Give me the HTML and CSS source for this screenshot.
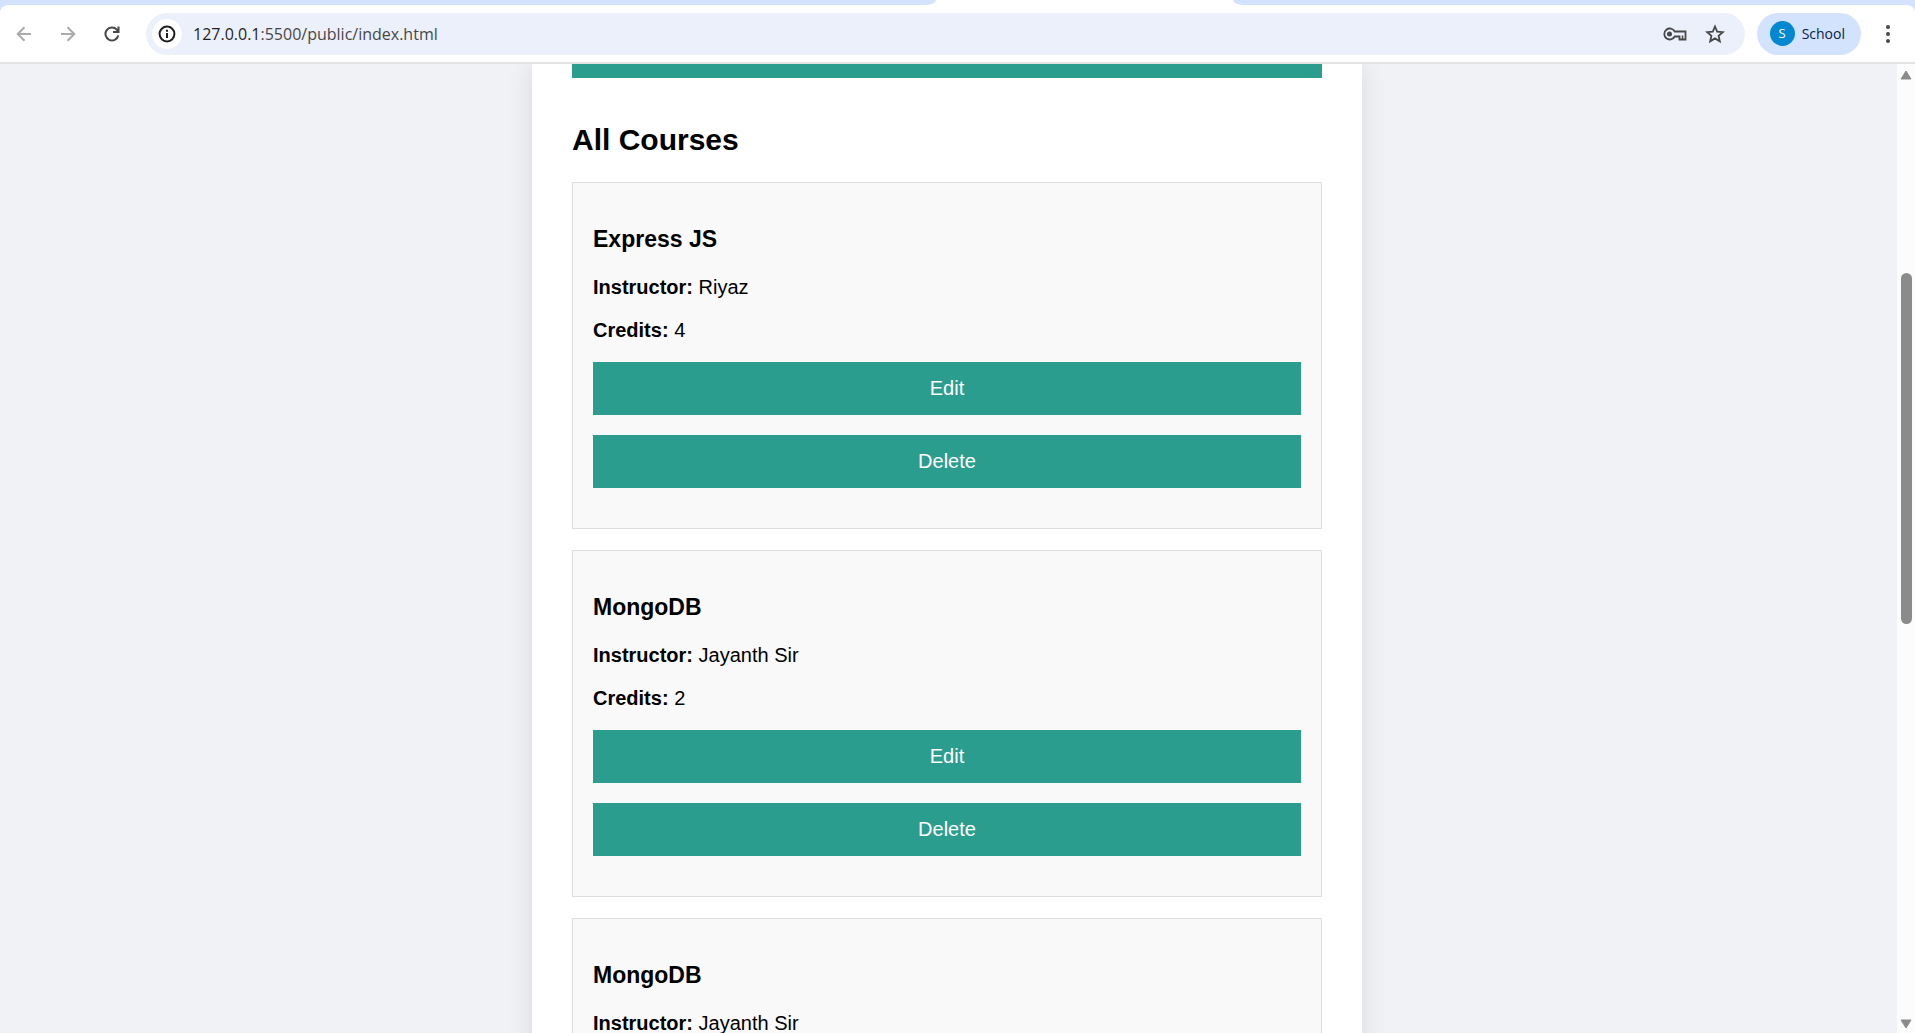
FILE: index.html
```html
<!DOCTYPE html>
<html lang="en">
<head>
<meta charset="utf-8">
<title>All Courses</title>
<link rel="stylesheet" href="styles.css">
</head>
<body>
<header class="chrome">
  <div class="tab-strip">
    <div class="tabs-before"></div>
    <div class="tab-active"></div>
    <div class="tabs-after"></div>
  </div>
  <div class="toolbar">
    <div class="nav">
      <button class="icon-button disabled" type="button" aria-label="Back">
        <svg width="16" height="16" viewBox="0 0 16 16"><path d="M15 8H2M8.500 1.200L1.700 8l6.800 6.800"/></svg>
      </button>
      <button class="icon-button disabled" type="button" aria-label="Forward">
        <svg width="16" height="16" viewBox="0 0 16 16"><path d="M1 8h13M7.500 1.200L14.300 8l-6.800 6.800"/></svg>
      </button>
      <button class="icon-button" type="button" aria-label="Reload">
        <svg width="16" height="16" viewBox="0 0 16 16"><path d="M14.300 9.500A6.500 6.500 0 1 1 12.800 3.600L14.500 5.500M14.500 .5v5.500H9"/></svg>
      </button>
    </div>
    <div class="address">
      <button class="site-info" type="button" aria-label="Site information">
        <svg width="18" height="18" viewBox="0 0 18 18"><circle cx="9" cy="9" r="7.400"/><path d="M9 8v5M9 4.800v2"/></svg>
      </button>
      <a class="url" href="#"><span class="host">127.0.0.1</span>:5500/public/index.html</a>
      <button class="icon-button" type="button" aria-label="Passwords">
        <svg width="24" height="14" viewBox="0 0 24 14"><path d="M11.700 4.500A5.500 5.500 0 1 0 11.700 9.500H16.500V12.500H22.500V4.500Z" stroke-width="1.800"/><circle class="solid" cx="6.500" cy="7" r="2.500"/><path d="M19.500 8.500v4" stroke-width="1.500"/></svg>
      </button>
      <button class="icon-button" type="button" aria-label="Bookmark">
        <svg width="20" height="20" viewBox="0 0 20 20"><path d="M10 2.500l2.200 5.100 5.600.500-4.200 3.700 1.200 5.500L10 14.400l-4.800 2.900 1.200-5.500L2.200 8.100l5.600-.500z" stroke-width="1.800"/></svg>
      </button>
    </div>
    <button class="profile" type="button"><span class="avatar">S</span>School</button>
    <button class="icon-button menu" type="button" aria-label="Menu">
      <svg width="6" height="20" viewBox="0 0 6 20"><circle class="solid" cx="3" cy="3" r="2"/><circle class="solid" cx="3" cy="10" r="2"/><circle class="solid" cx="3" cy="17" r="2"/></svg>
    </button>
  </div>
</header>
<div class="window">
  <main class="page">
    <div class="container">
      <button class="submit" type="button" aria-label="Submit"></button>
      <h2>All Courses</h2>
      <article class="course">
        <h3>Express JS</h3>
        <p><strong>Instructor:</strong> Riyaz</p>
        <p><strong>Credits:</strong> 4</p>
        <button class="action" type="button">Edit</button>
        <button class="action" type="button">Delete</button>
      </article>
      <article class="course">
        <h3>MongoDB</h3>
        <p><strong>Instructor:</strong> Jayanth Sir</p>
        <p><strong>Credits:</strong> 2</p>
        <button class="action" type="button">Edit</button>
        <button class="action" type="button">Delete</button>
      </article>
      <article class="course">
        <h3>MongoDB</h3>
        <p><strong>Instructor:</strong> Jayanth Sir</p>
      </article>
    </div>
  </main>
  <div class="scrollbar">
    <svg width="12" height="10" viewBox="0 0 12 10"><path class="arrow" d="M6 1L11 9H1z"/></svg>
    <div class="track"><div class="thumb"></div></div>
    <svg width="12" height="10" viewBox="0 0 12 10"><path class="arrow" d="M6 9L11 1H1z"/></svg>
  </div>
</div>
</body>
</html>
```

FILE: styles.css
```css
* {
  box-sizing: border-box;
}

body {
  margin: 0;
  height: 100vh;
  display: flex;
  flex-direction: column;
  overflow: hidden;
  font-family: "Liberation Sans", Arial, sans-serif;
  font-size: 20px;
  color: #000;
  background: #f0f2f5;
}

button {
  border: 0;
  padding: 0;
  margin: 0;
  background: none;
  font: inherit;
}

svg {
  display: block;
  fill: none;
  stroke: currentColor;
  stroke-width: 2;
}

.solid {
  fill: currentColor;
  stroke: none;
}

/* Browser chrome */
.chrome {
  flex: none;
  background: #d3e3fd;
  border-bottom: 2px solid #e1e2e2;
  font-family: "Open Sans", "Noto Sans", sans-serif;
}

.tab-strip {
  display: flex;
  height: 5px;
  background: #fff;
}

.tabs-before,
.tabs-after {
  flex: 937 1 0;
  background: #d3e3fd;
  border-bottom-right-radius: 12px 6px;
}

.tabs-after {
  flex-grow: 683;
  border-radius: 0 0 0 12px / 0 0 0 6px;
}

.tab-active {
  flex: none;
  width: 297px;
}

.toolbar {
  display: flex;
  align-items: center;
  height: 57px;
  padding: 0 24px 0 16px;
  background: #fff;
  border-radius: 8px 8px 0 0;
}

.nav {
  display: flex;
  gap: 28px;
  margin-right: 26px;
}

.icon-button {
  color: #474747;
}

.disabled {
  color: #ababab;
}

.address {
  flex: 1;
  display: flex;
  align-items: center;
  gap: 18px;
  height: 42px;
  padding: 0 20px 0 6px;
  border-radius: 21px;
  background: #ecf0fa;
}

.site-info {
  display: flex;
  align-items: center;
  justify-content: center;
  width: 30px;
  height: 30px;
  border-radius: 50%;
  background: #fff;
  color: #1f1f1f;
}

.url {
  flex: 1;
  margin-left: -7px;
  font-size: 16px;
  color: #474747;
  text-decoration: none;
}

.host {
  color: #1f1f1f;
}

.profile {
  display: flex;
  align-items: center;
  gap: 7px;
  height: 42px;
  margin: 0 24px 0 12px;
  padding: 0 16px 0 13px;
  border-radius: 21px;
  background: #d3e3fd;
  color: #041e49;
  font-size: 14px;
}

.avatar {
  width: 25px;
  height: 25px;
  border-radius: 50%;
  background: #0288d1;
  color: #fff;
  font-size: 13px;
  line-height: 25px;
  text-align: center;
}

/* Page */
.window {
  flex: 1;
  display: flex;
  min-height: 0;
}

.page {
  flex: 1;
  padding-right: 3px;
  overflow: hidden;
}

.container {
  max-width: 830px;
  min-height: 100%;
  margin: 0 auto;
  padding: 0 40px;
  background: #fff;
  box-shadow: 0 0 25px rgba(0, 0, 0, 0.1);
}

.submit {
  display: block;
  width: 100%;
  height: 14px;
  background: #2a9d8f;
}

h2 {
  margin: 45px 0 25px;
  font-size: 30px;
  line-height: 34px;
}

.course {
  margin-bottom: 21px;
  padding: 20px;
  border: 1px solid #ddd;
  background: #f9f9f9;
}

h3 {
  margin: 23px 0;
  font-size: 23px;
  line-height: 27px;
}

p {
  margin: 20px 0;
  line-height: 23px;
}

.action {
  display: block;
  width: 100%;
  margin-bottom: 20px;
  padding: 15px;
  background: #2a9d8f;
  color: #fff;
  line-height: 23px;
}

/* Scrollbar */
.scrollbar {
  flex: none;
  display: flex;
  flex-direction: column;
  align-items: center;
  width: 18px;
  padding: 6px 0 4px;
  background: #fcfcfc;
}

.arrow {
  fill: #8b8b8b;
  stroke: #8b8b8b;
  stroke-width: 1;
  stroke-linejoin: round;
}

.track {
  flex: 1;
  width: 11px;
  padding-top: 193px;
}

.thumb {
  height: 47%;
  border-radius: 6px;
  background: #8b8b8b;
}
```
